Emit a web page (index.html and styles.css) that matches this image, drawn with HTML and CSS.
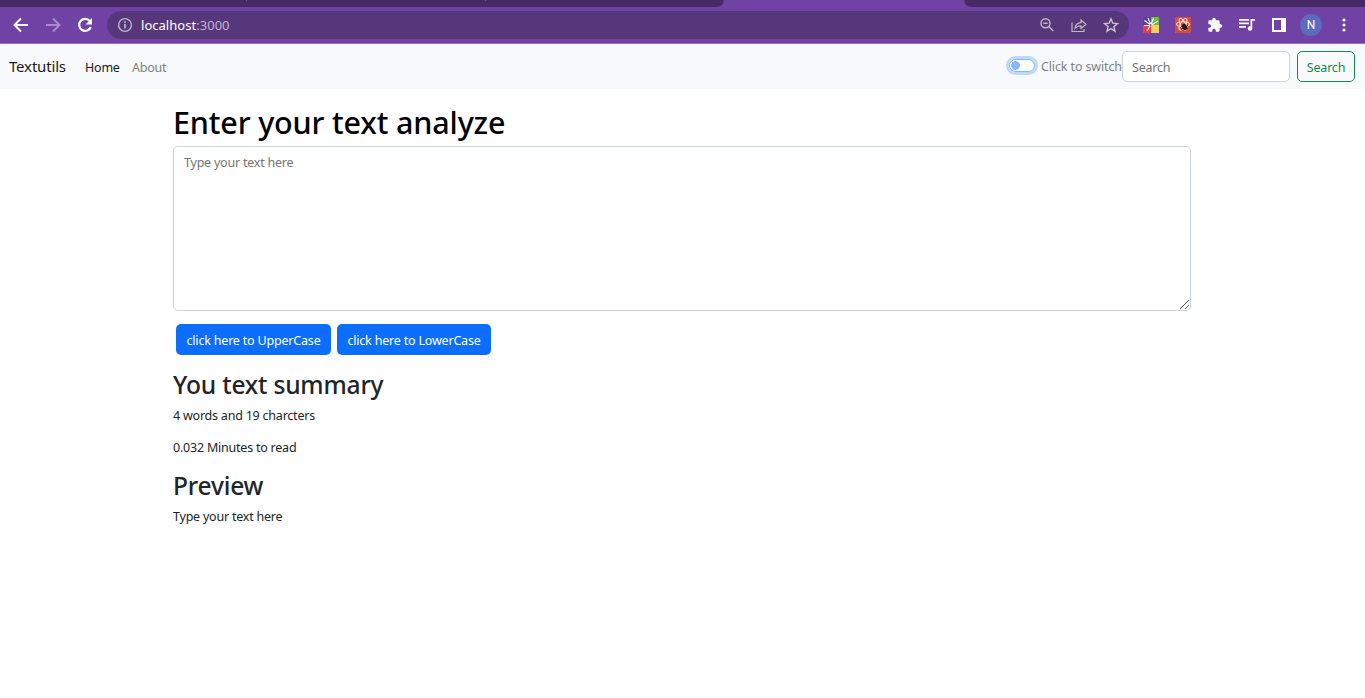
FILE: index.html
```html
<!DOCTYPE html>
<html lang="en">
<head>
<meta charset="utf-8">
<title>Textutils</title>
<link rel="stylesheet" href="styles.css">
</head>
<body>
<header class="browser">
  <div class="tabstrip"><div class="tabs-left"><i class="tick"></i><i class="tick"></i></div><div class="tabs-right"></div></div>
  <div class="toolbar">
    <div class="nav-icons">
      <svg width="16" height="16" viewBox="0 0 16 16" fill="none" stroke="#fff" stroke-width="2"><path d="M15 8H2M8 1.500 1.500 8 8 14.500"/></svg>
      <svg width="16" height="16" viewBox="0 0 16 16" fill="none" stroke="#a98bca" stroke-width="2"><path d="M1 8h13M8 1.500 14.500 8 8 14.500"/></svg>
      <svg width="16" height="16" viewBox="0 0 16 16"><path d="M13 4.300A6 6 0 1 0 13.800 10" fill="none" stroke="#fff" stroke-width="2.200"/><path d="M15 1v6.500H8.500z" fill="#fff"/></svg>
    </div>
    <div class="address">
      <svg width="16" height="16" viewBox="0 0 16 16" fill="none" stroke="#c0b3cc"><circle cx="8" cy="8" r="6.400" stroke-width="1.400"/><path d="M8 7v4.500M8 4.200v1.700" stroke-width="1.700"/></svg>
      <span class="url">localhost<span class="port">:3000</span></span>
      <div class="address-icons">
        <svg width="16" height="16" viewBox="0 0 16 16" fill="none" stroke="#c0b8bd" stroke-width="1.500"><circle cx="6.500" cy="6.200" r="4.500"/><path d="M4.400 6.200h4.200M9.800 9.500l4.500 4.500"/></svg>
        <svg width="16" height="16" viewBox="0 0 16 16" fill="none" stroke="#c0b8bd" stroke-width="1.200"><path d="M1 5.500v9h12V12M4 11.500c.3-3.600 2-5.600 6-5.800V3l5 4.300-5 4.200V8.800C7.500 8.800 5.500 9.500 4 11.500z"/></svg>
        <svg width="16" height="16" viewBox="0 0 16 16" fill="none" stroke="#c8c1c9" stroke-width="1.400"><path d="m8 1.800 1.800 4.300 4.700.4-3.600 3.100 1.100 4.600-4-2.500-4 2.500 1.100-4.600L1.500 6.500l4.700-.4z"/></svg>
      </div>
    </div>
    <div class="extensions">
      <svg width="16" height="16" viewBox="0 0 16 16"><path fill="#56408f" d="M0 0h8v8H0z"/><path fill="#6dbd45" d="M8 0h8v8H8z"/><path fill="#ed3a43" d="M0 8h8v8H0z"/><path fill="#f2cf63" d="M8 8h8v8H8z"/><path d="M1.500 3.500 7 7.500M5 1l2.500 6M10.500 1.500 8 7M15 4 8.500 8M1 8.500h6M7 9l-3 5" stroke="#fff" stroke-width="1.100"/></svg>
      <svg width="16" height="16" viewBox="0 0 16 16"><path fill="#d84b3a" d="M0 0h16v16H0z"/><g fill="none" stroke="#f7ded9" stroke-width="1.100"><ellipse cx="8" cy="7.300" rx="6.400" ry="2.500"/><ellipse cx="8" cy="7.300" rx="6.400" ry="2.500" transform="rotate(60 8 7.300)"/><ellipse cx="8" cy="7.300" rx="6.400" ry="2.500" transform="rotate(120 8 7.300)"/></g><ellipse cx="9.500" cy="10" rx="2.400" ry="3.400" fill="#261b19" transform="rotate(-25 9.500 10)"/><path d="m6 9 7 3M6 12.500l7-4" stroke="#261b19"/></svg>
      <svg width="16" height="16" viewBox="0 0 24 24" fill="#fff"><path d="M20.500 11H19V7a2 2 0 0 0-2-2h-4V3.500a2.500 2.500 0 0 0-5 0V5H4a2 2 0 0 0-2 2v3.800h1.500a2.700 2.700 0 0 1 0 5.400H2V20a2 2 0 0 0 2 2h3.800v-1.500a2.700 2.700 0 0 1 5.400 0V22H17a2 2 0 0 0 2-2v-4h1.500a2.500 2.500 0 0 0 0-5z"/></svg>
      <svg width="16" height="16" viewBox="0 0 16 16" fill="#fff"><path d="M0 2h10v1.700H0zM0 5.500h10v1.700H0zM0 9h7v1.700H0zM11.500 2H16v1.800h-2.800v7.700h-1.700z"/><circle cx="11" cy="11.500" r="2.200"/></svg>
      <svg width="16" height="16" viewBox="0 0 16 16"><path fill="#fff" fill-rule="evenodd" d="M1 1h14v14H1zm2 2v10h7V3z"/></svg>
    </div>
    <div class="avatar">N</div>
    <svg class="kebab" width="4" height="16" viewBox="0 0 4 16" fill="#fff"><circle cx="2" cy="3" r="1.600"/><circle cx="2" cy="8" r="1.600"/><circle cx="2" cy="13" r="1.600"/></svg>
  </div>
</header>
<nav class="navbar">
  <a class="brand">Textutils</a>
  <a class="link active">Home</a>
  <a class="link">About</a>
  <form class="tools">
    <span class="switch"></span>
    <label class="switch-label">Click to switch</label>
    <div class="search">Search</div>
    <button type="button" class="btn outline">Search</button>
  </form>
</nav>
<main class="container">
  <h1>Enter your text analyze</h1>
  <div class="textarea">Type your text here
    <svg class="grip" width="9" height="9" viewBox="0 0 9 9" stroke="#555" stroke-width="1"><path d="M0 9 9 0M5 9l4-4"/></svg>
  </div>
  <div class="buttons">
    <button class="btn primary upper">click here to UpperCase</button>
    <button class="btn primary lower">click here to LowerCase</button>
  </div>
  <h2>You text summary</h2>
  <p>4 words and 19 charcters</p>
  <p>0.032 Minutes to read</p>
  <h2 class="preview">Preview</h2>
  <p>Type your text here</p>
</main>
</body>
</html>
```
FILE: styles.css
```css
* { box-sizing: border-box; }
body { margin: 0; background: #fff; color: #212529; font: 12.500px/19.200px "Noto Sans", sans-serif; letter-spacing: -.22px; }
button { font: inherit; letter-spacing: -.19px; }
svg { display: block; flex: none; }
.browser { height: 44px; background: #6f42a3; border-bottom: 1px solid #956fc2; }
.tabstrip { height: 7px; display: flex; justify-content: space-between; }
.tabs-left, .tabs-right { background: #472a65; height: 7px; }
.tabs-left { width: 724px; border-bottom-right-radius: 7px; display: flex; padding-left: 246px; gap: 238px; }
.tabs-right { width: 401px; border-bottom-left-radius: 7px; }
.tick { width: 1px; height: 1px; background: #705587; }
.toolbar { height: 36px; display: flex; align-items: center; padding: 0 19px 0 13px; }
.nav-icons { display: flex; gap: 16px; width: 94px; flex: none; }
.address { width: 1022px; flex: none; height: 28px; border-radius: 14px; background: #57377b; display: flex; align-items: center; padding: 0 10px; }
.url { color: #fff; margin-left: 8px; line-height: 20px; white-space: nowrap; font-size: 13px; letter-spacing: .03px; padding-bottom: 1px; }
.port { color: #c2b1d3; }
.address-icons { margin-left: auto; display: flex; gap: 16px; }
.extensions { display: flex; gap: 16px; margin-left: 14px; }
.avatar { width: 22px; height: 22px; border-radius: 50%; background: #5c6bc0; color: #fff; font: 12px/22px Roboto, sans-serif; text-align: center; margin-left: 13px; letter-spacing: 0; }
.kebab { margin-left: 20px; }
.navbar { height: 45px; background: #f8f9fa; display: flex; align-items: center; padding: 0 10px 0 9px; white-space: nowrap; }
.brand { font-size: 15px; letter-spacing: -.17px; color: #1a1a1a; width: 76px; }
.link { width: 47px; color: #808182; padding-top: 2px; }
.link.active { color: #1a1a1a; }
.tools { margin-left: auto; display: flex; align-items: center; }
.switch { width: 26px; height: 13px; border: 1px solid #86b7fe; border-radius: 7px; background: radial-gradient(circle at 5.500px 5.500px, #86b7fe 4px, #fff 4.700px); box-shadow: 0 0 0 3px #bfd9fe; margin: 0 6px 2px 0; }
.switch-label { width: 81px; color: #808182; letter-spacing: -.13px; }
.search { width: 168px; height: 31px; border: 1px solid #ced4da; border-radius: 5px; background: #fff; color: #757575; padding: 6px 9px; margin-right: 7px; }
.btn { height: 31px; padding: 3px 0 0; border: 0; border-radius: 5px; white-space: nowrap; display: block; }
.outline { width: 58px; border: 1px solid #198754; color: #198754; background: transparent; padding-top: 2px; }
.container { width: 1018px; margin: 0 auto 0 173px; }
h1, h2 { font-weight: 500; margin: 0; white-space: nowrap; }
h1 { color: #000; font-size: 30.500px; line-height: 38px; padding-top: 14px; height: 57px; letter-spacing: -.16px; }
.textarea { position: relative; height: 165px; border: 1px solid #ced4da; border-radius: 5px; padding: 6px 10px; color: #757575; }
.grip { position: absolute; right: 1px; bottom: 1px; }
.buttons { display: flex; gap: 6px; padding: 13px 3px 0; }
.primary { background: #0d6efd; color: #fff; }
.upper { width: 155px; }
.lower { width: 154px; }
h2 { font-size: 24.600px; line-height: 31px; margin: 14px 0 6px; letter-spacing: -.2px; }
.preview { margin: 13px 0 6px; }
p { margin: 0 0 13px; height: 19px; }
```
